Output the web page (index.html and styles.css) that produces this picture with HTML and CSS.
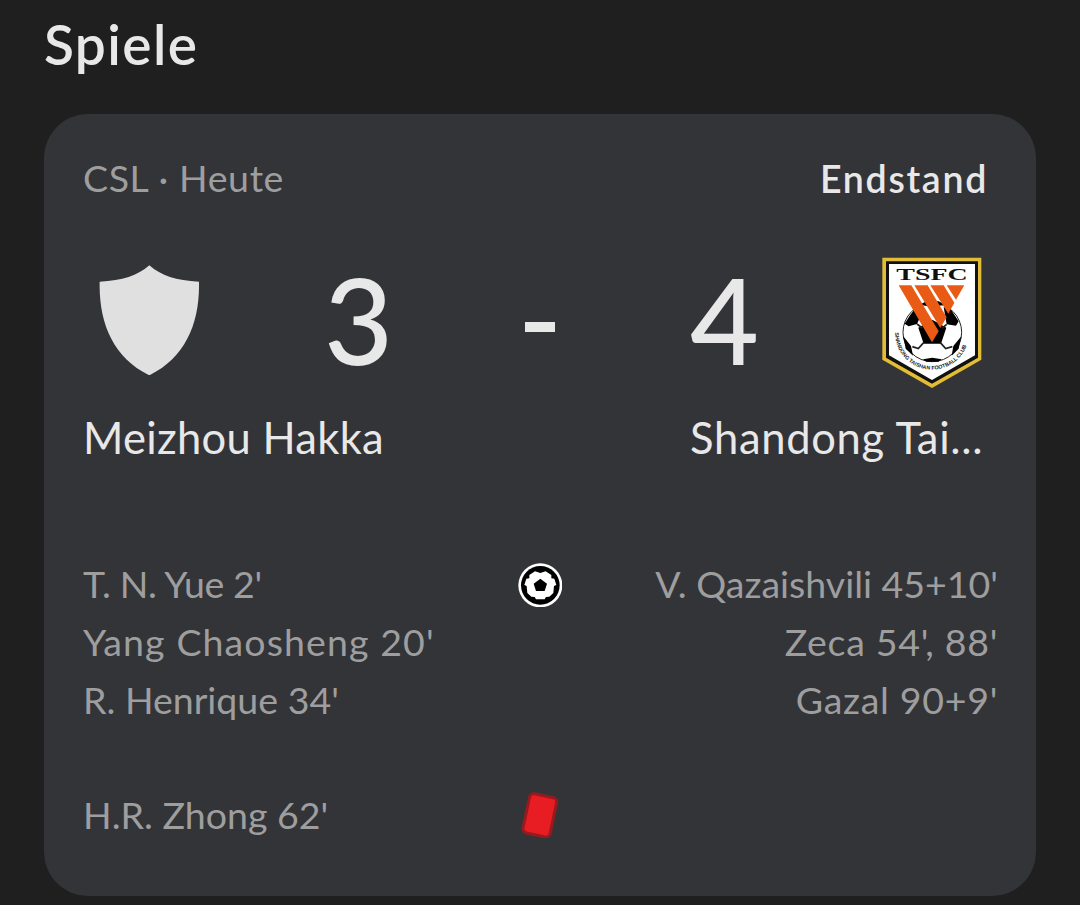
FILE: index.html
```
<!DOCTYPE html>
<html lang="de">
<head>
	<meta charset="utf-8">
	<title>Spiele</title>
	<link rel="stylesheet" href="styles.css">
</head>
<body>
	<h1>Spiele</h1>
	<div class="card">
		<div class="card-header">
			<span class="league">CSL · Heute</span>
			<span class="status">Endstand</span>
		</div>

		<div class="scoreboard">
			<div class="team">
				<div class="team-score">
					<svg class="shield" viewBox="57 44 302 332">
						<path fill="#e0e0e0" d="M208 45C244 77 288 90 357 94C360 220 315 323 208 375C101 323 56 220 59 94C128 90 172 77 208 45Z"/>
					</svg>
					<span class="score">3</span>
				</div>
				<div class="team-name home">Meizhou Hakka</div>
			</div>
			<div class="dash"></div>
			<div class="team">
				<div class="team-score">
					<span class="score">4</span>
					<svg class="crest" viewBox="37 37 299 395">
						<path fill="#e3bd35" d="M38 39H335V345L187 430L38 345Z"/>
						<path fill="#111" d="M49 50H325V339L187 417L49 339Z"/>
						<path fill="#fff" d="M58 58H316V332L187 406L58 332Z"/>
						<text class="crest-title" x="187" y="105" text-anchor="middle" textLength="214" lengthAdjust="spacingAndGlyphs">TSFC</text>
						<circle cx="188" cy="263" r="88" fill="#fff" stroke="#222" stroke-width="3"/>
						<path d="M146 249L188 225L230 249L214 297H162ZM105 237L120 213L140 187L158 203L142 238L117 245ZM222 187L244 195L267 230L259 243L231 239ZM101 275L124 304L130 333L108 312ZM275 275L251 304L246 333L267 312ZM160 344L188 339L216 344L206 351H170ZM150 180L188 187L226 180L207 170H170Z"/>
						<path d="M162 294L146 312L128 306M212 294L228 312L248 306M142 238L158 250M231 239L218 250" fill="none" stroke="#222" stroke-width="5"/>
						<path fill="#e95b15" d="M87 122H125L207 260L187 293Z"/>
						<path fill="#e95b15" d="M134 122H174L231 218L212 250Z"/>
						<path fill="#e95b15" d="M182 122H222L254 174L236 207Z"/>
						<path fill="#e95b15" d="M231 122H284L259 165Z"/>
						<path id="crest-arc" d="M76 264A111 111 0 0 0 298 264" fill="none"/>
						<text class="crest-motto"><textPath href="#crest-arc">SHANDONG TAISHAN FOOTBALL CLUB</textPath></text>
					</svg>
				</div>
				<div class="team-name away">Shandong Tai...</div>
			</div>
		</div>

		<div class="events">
			<div class="event-list">
				<div class="tight">T. N. Yue 2'</div>
				<div class="wider">Yang Chaosheng 20'</div>
				<div>R. Henrique 34'</div>
			</div>
			<div class="event-icon">
				<svg class="ball" viewBox="38 41 134 134">
					<circle cx="105" cy="108" r="66" fill="#fff"/>
					<circle cx="105" cy="108" r="58" fill="#000"/>
					<path fill="#fff" d="M89 66L105 71L121 66L138 77V87L147 88L153 107L146 110L144 131L132 142L122 143L118 150H92L88 143L78 142L66 131L64 110L57 107L63 88L72 87V77Z"/>
					<path d="M105 88L125 103L118 125H92L85 103Z"/>
				</svg>
			</div>
			<div class="event-list right">
				<div>V. Qazaishvili 45+10'</div>
				<div class="wide">Zeca 54', 88'</div>
				<div class="wide">Gazal 90+9'</div>
			</div>
		</div>

		<div class="events">
			<div class="event-list">
				<div>H.R. Zhong 62'</div>
			</div>
			<div class="event-icon">
				<svg class="red-card" viewBox="48 34 114 140">
					<rect x="63" y="44" width="83" height="120" rx="13" transform="rotate(12 104.5 104)" fill="#e81d24" stroke="#981a1e" stroke-width="9"/>
				</svg>
			</div>
			<div class="event-list right"></div>
		</div>
	</div>
</body>
</html>
```
FILE: styles.css
```
body {
    margin: 0;
    padding: 0 44px;
    background-color: #1f1f1f;
    color: #e8e8e8;
    font-family: Lato, "Open Sans", sans-serif;
}

h1 {
    margin: 0 0 26px;
    font-size: 55px;
    line-height: 88px;
    font-weight: 600;
    letter-spacing: 1.4px;
}

.card {
    box-sizing: border-box;
    height: 782px;
    padding: 34px 38px 0 39px;
    border-radius: 44px;
    background-color: #333438;
}

.card-header {
    display: flex;
    justify-content: space-between;
    padding-right: 10px;
    font-size: 37.5px;
    line-height: 60px;
}

.league {
    color: #9e9e9f;
    letter-spacing: 0.6px;
}

.status {
    padding-top: 1px;
    font-weight: 600;
    letter-spacing: 1.7px;
}

.scoreboard {
    display: grid;
    grid-template-columns: 307px 1fr 292px;
    padding: 48px 16px 0 0;
}

.team-score {
    display: flex;
    justify-content: space-between;
    align-items: center;
    height: 132px;
}

.score {
    width: 66px;
    padding-bottom: 8px;
    font-size: 119px;
    line-height: 132px;
    font-weight: 500;
}

.team-name {
    padding-top: 18px;
    font-size: 43.5px;
    line-height: 60px;
    white-space: nowrap;
}

.home {
    letter-spacing: 0.3px;
}

.away {
    letter-spacing: 0.7px;
}

.dash {
    width: 30px;
    height: 10px;
    margin: 65px auto 0;
    background-color: #e8e8e8;
}

.shield {
    width: 100.67px;
    height: 110.67px;
    margin-left: 16px;
    margin-top: -6px;
}

.crest {
    width: 99.67px;
    height: 131.67px;
}

.crest-title {
    font-family: "Liberation Serif", serif;
    font-size: 53px;
    font-weight: bold;
    fill: #111;
}

.crest-motto {
    font-family: "Liberation Sans", Arial, sans-serif;
    font-size: 16px;
    font-weight: bold;
    fill: #222;
}

.events {
    display: grid;
    grid-template-columns: 1fr 60px 1fr;
    margin-top: 88px;
    margin-left: -1px;
    color: #9e9e9f;
    font-size: 37.5px;
    line-height: 58px;
    white-space: nowrap;
}

.events + .events {
    margin-top: 57px;
}

.event-list {
    padding-left: 1px;
}

.tight {
    letter-spacing: -0.4px;
}

.wide {
    letter-spacing: 0.7px;
}

.wider {
    letter-spacing: 1.1px;
}

.event-icon {
    display: flex;
    justify-content: center;
    align-items: center;
    height: 60px;
}

.right {
    text-align: right;
}

.ball {
    width: 44.67px;
    height: 44.67px;
}

.red-card {
    width: 38px;
    height: 46.67px;
    margin-bottom: 2px;
}
```
